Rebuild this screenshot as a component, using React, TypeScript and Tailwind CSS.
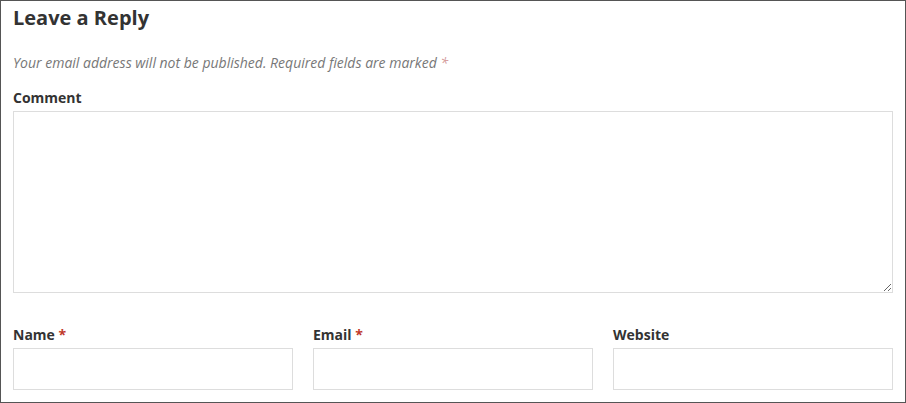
import React from 'react';

const Label: React.FC<{ text: string; required?: boolean }> = ({ text, required }) => (
  <label className="block text-[14px] leading-[20px] font-bold text-[#333]">
    {text}
    {required && <span className="text-[#c0392b]"> *</span>}
  </label>
);

export default function App() {
  return (
    <div
      className="w-[906px] h-[403px] border border-[#555] bg-white overflow-hidden"
      style={{ fontFamily: '"Open Sans", sans-serif' }}
    >
      <div className="px-[12px] pt-[4px] flex flex-col">
        <h3 className="text-[20px] leading-[26px] font-bold text-[#333]">Leave a Reply</h3>
        <p className="mt-[22px] text-[14px] leading-[20px] italic text-[#777]">
          Your email address will not be published. Required fields are marked{' '}
          <span className="text-[#d49a9a]">*</span>
        </p>
        <div className="mt-[15px]">
          <Label text="Comment" />
          <textarea className="mt-[3px] block w-full h-[182px] border border-[#ddd] bg-white outline-none" />
        </div>
        <div className="mt-[32px] grid grid-cols-3 gap-[20px]">
          <div>
            <Label text="Name" required />
            <input type="text" className="mt-[3px] block w-full h-[42px] border border-[#ddd] bg-white outline-none" />
          </div>
          <div>
            <Label text="Email" required />
            <input type="email" className="mt-[3px] block w-full h-[42px] border border-[#ddd] bg-white outline-none" />
          </div>
          <div>
            <Label text="Website" />
            <input type="url" className="mt-[3px] block w-full h-[42px] border border-[#ddd] bg-white outline-none" />
          </div>
        </div>
      </div>
    </div>
  );
}
